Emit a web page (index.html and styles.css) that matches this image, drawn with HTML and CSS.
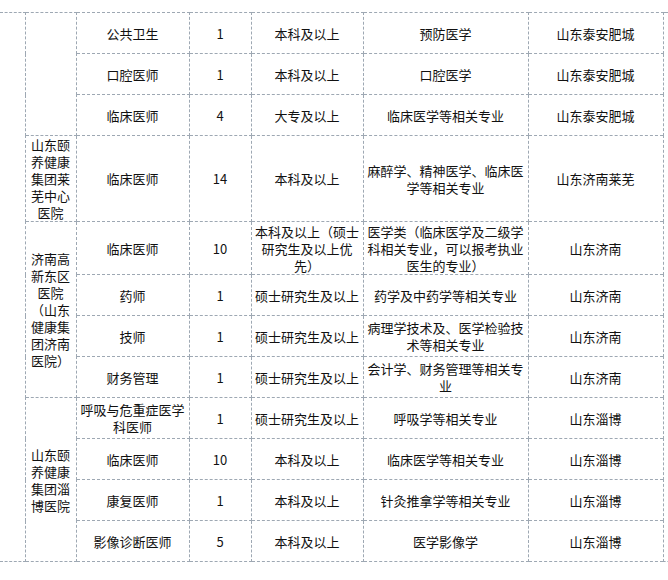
FILE: index.html
```html
<!DOCTYPE html>
<html lang="zh-CN">
<head>
<meta charset="utf-8">
<title>招聘岗位</title>
<link rel="stylesheet" href="styles.css">
</head>
<body>
<table class="jobs">
  <colgroup>
    <col class="c-a"><col class="c-b"><col class="c-c"><col class="c-d"><col class="c-e"><col class="c-f"><col class="c-g"><col class="c-h">
  </colgroup>
  <tbody>
    <tr class="r41">
      <td class="edge-l" rowspan="12"></td>
      <td class="org" rowspan="3"></td>
      <td>公共卫生</td><td>1</td><td>本科及以上</td><td>预防医学</td><td>山东泰安肥城</td>
      <td class="edge-r" rowspan="12"></td>
    </tr>
    <tr class="r41"><td>口腔医师</td><td>1</td><td>本科及以上</td><td>口腔医学</td><td>山东泰安肥城</td></tr>
    <tr class="r41"><td>临床医师</td><td>4</td><td>大专及以上</td><td>临床医学等相关专业</td><td>山东泰安肥城</td></tr>
    <tr class="r87">
      <td class="org">山东颐养健康集团莱芜中心医院</td>
      <td>临床医师</td><td>14</td><td>本科及以上</td><td>麻醉学、精神医学、临床医学等相关专业</td><td>山东济南莱芜</td>
    </tr>
    <tr class="r53">
      <td class="org" rowspan="4">济南高新东区医院（山东健康集团济南医院）</td>
      <td>临床医师</td><td>10</td><td>本科及以上（硕士研究生及以上优先）</td><td>医学类（临床医学及二级学科相关专业，可以报考执业医生的专业）</td><td>山东济南</td>
    </tr>
    <tr class="r41"><td>药师</td><td>1</td><td>硕士研究生及以上</td><td>药学及中药学等相关专业</td><td>山东济南</td></tr>
    <tr class="r41"><td>技师</td><td>1</td><td>硕士研究生及以上</td><td>病理学技术及、医学检验技术等相关专业</td><td>山东济南</td></tr>
    <tr class="r41"><td>财务管理</td><td>1</td><td>硕士研究生及以上</td><td>会计学、财务管理等相关专业</td><td>山东济南</td></tr>
    <tr class="r41">
      <td class="org" rowspan="4">山东颐养健康集团淄博医院</td>
      <td>呼吸与危重症医学科医师</td><td>1</td><td>硕士研究生及以上</td><td>呼吸学等相关专业</td><td>山东淄博</td>
    </tr>
    <tr class="r41"><td>临床医师</td><td>10</td><td>本科及以上</td><td>临床医学等相关专业</td><td>山东淄博</td></tr>
    <tr class="r41"><td>康复医师</td><td>1</td><td>本科及以上</td><td>针灸推拿学等相关专业</td><td>山东淄博</td></tr>
    <tr class="r41"><td>影像诊断医师</td><td>5</td><td>本科及以上</td><td>医学影像学</td><td>山东淄博</td></tr>
  </tbody>
</table>
</body>
</html>
```

FILE: styles.css
```css
html, body {
  margin: 0;
  padding: 0;
  background: #ffffff;
  overflow: hidden;
}

body {
  width: 668px;
  height: 580px;
  padding-top: 12px;
  box-sizing: border-box;
}

.jobs {
  border-collapse: collapse;
  table-layout: fixed;
  width: 670px;
  font-family: "Noto Sans CJK SC", "Noto Sans", sans-serif;
  font-size: 13px;
  line-height: 17px;
  color: #111111;
}

.c-a { width: 25px; }
.c-b { width: 51px; }
.c-c { width: 113px; }
.c-d { width: 62px; }
.c-e { width: 112px; }
.c-f { width: 165px; }
.c-g { width: 135px; }
.c-h { width: 7px; }

.jobs td {
  border: 1px dashed #9ea8b3;
  padding: 0 3px;
  text-align: center;
  vertical-align: middle;
  word-break: break-all;
}

.jobs td.org {
  padding: 0 5px;
}

.jobs td.edge-l {
  border-left: none;
  padding: 0;
}

.jobs td.edge-r {
  border-right: none;
  padding: 0;
}

.r41 { height: 41px; }
.r53 { height: 53px; }
.r87 { height: 86px; }
```
